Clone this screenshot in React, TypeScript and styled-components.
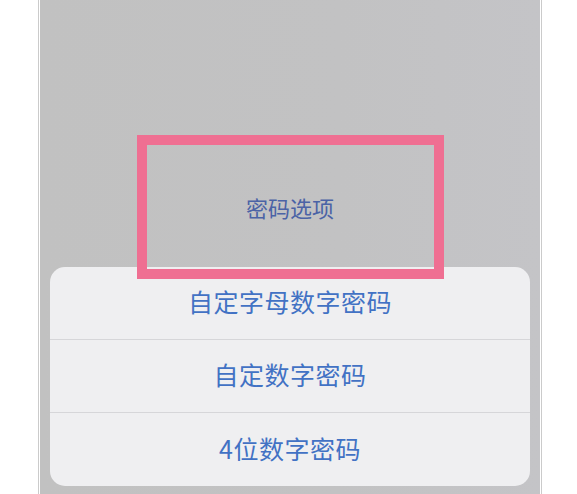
import styled, { createGlobalStyle } from "styled-components";

const GlobalStyle = createGlobalStyle`
  html, body {
    margin: 0;
    padding: 0;
    background: #ffffff;
    font-family: "Noto Sans CJK SC", "Noto Sans", sans-serif;
  }
`;

const options = ["自定字母数字密码", "自定数字密码", "4位数字密码"];

const Page = styled.div`
  width: 577px;
  height: 494px;
  overflow: hidden;
`;

const Screen = styled.div`
  position: relative;
  margin-left: 40px;
  width: 500px;
  height: 494px;
  background: linear-gradient(90deg, #c1c1c1 0%, #c2c2c3 60%, #c4c4c7 100%);
  box-shadow: 0 0 0 1px #ffffff, 0 0 0 2px #cbcbcb;
  display: flex;
  flex-direction: column;
`;

const Header = styled.div`
  height: 267px;
  display: flex;
  align-items: flex-end;
  justify-content: center;
  box-sizing: border-box;
  padding-bottom: 47px;
`;

const Title = styled.div`
  font-size: 22px;
  line-height: 26px;
  color: #4b63a6;
`;

const Sheet = styled.div`
  margin: 0 10px;
  background: #efeff1;
  border-radius: 15px;
  overflow: hidden;
`;

const Option = styled.div<{ $last?: boolean }>`
  height: 73px;
  box-sizing: border-box;
  padding-bottom: 4px;
  display: flex;
  align-items: center;
  justify-content: center;
  font-size: 25px;
  letter-spacing: 0.5px;
  color: #4272c4;
  border-bottom: ${(p) => (p.$last ? "none" : "1px solid #d6d6d9")};
`;

const Highlight = styled.div`
  position: absolute;
  left: 97px;
  top: 135px;
  width: 307px;
  height: 144px;
  box-sizing: border-box;
  border: 10px solid #ef6f92;
  pointer-events: none;
`;

export default function App() {
  return (
    <Page>
      <GlobalStyle />
      <Screen>
        <Header>
          <Title>密码选项</Title>
        </Header>
        <Sheet>
          {options.map((o, i) => (
            <Option key={o} $last={i === options.length - 1}>
              {o}
            </Option>
          ))}
        </Sheet>
        <Highlight />
      </Screen>
    </Page>
  );
}
